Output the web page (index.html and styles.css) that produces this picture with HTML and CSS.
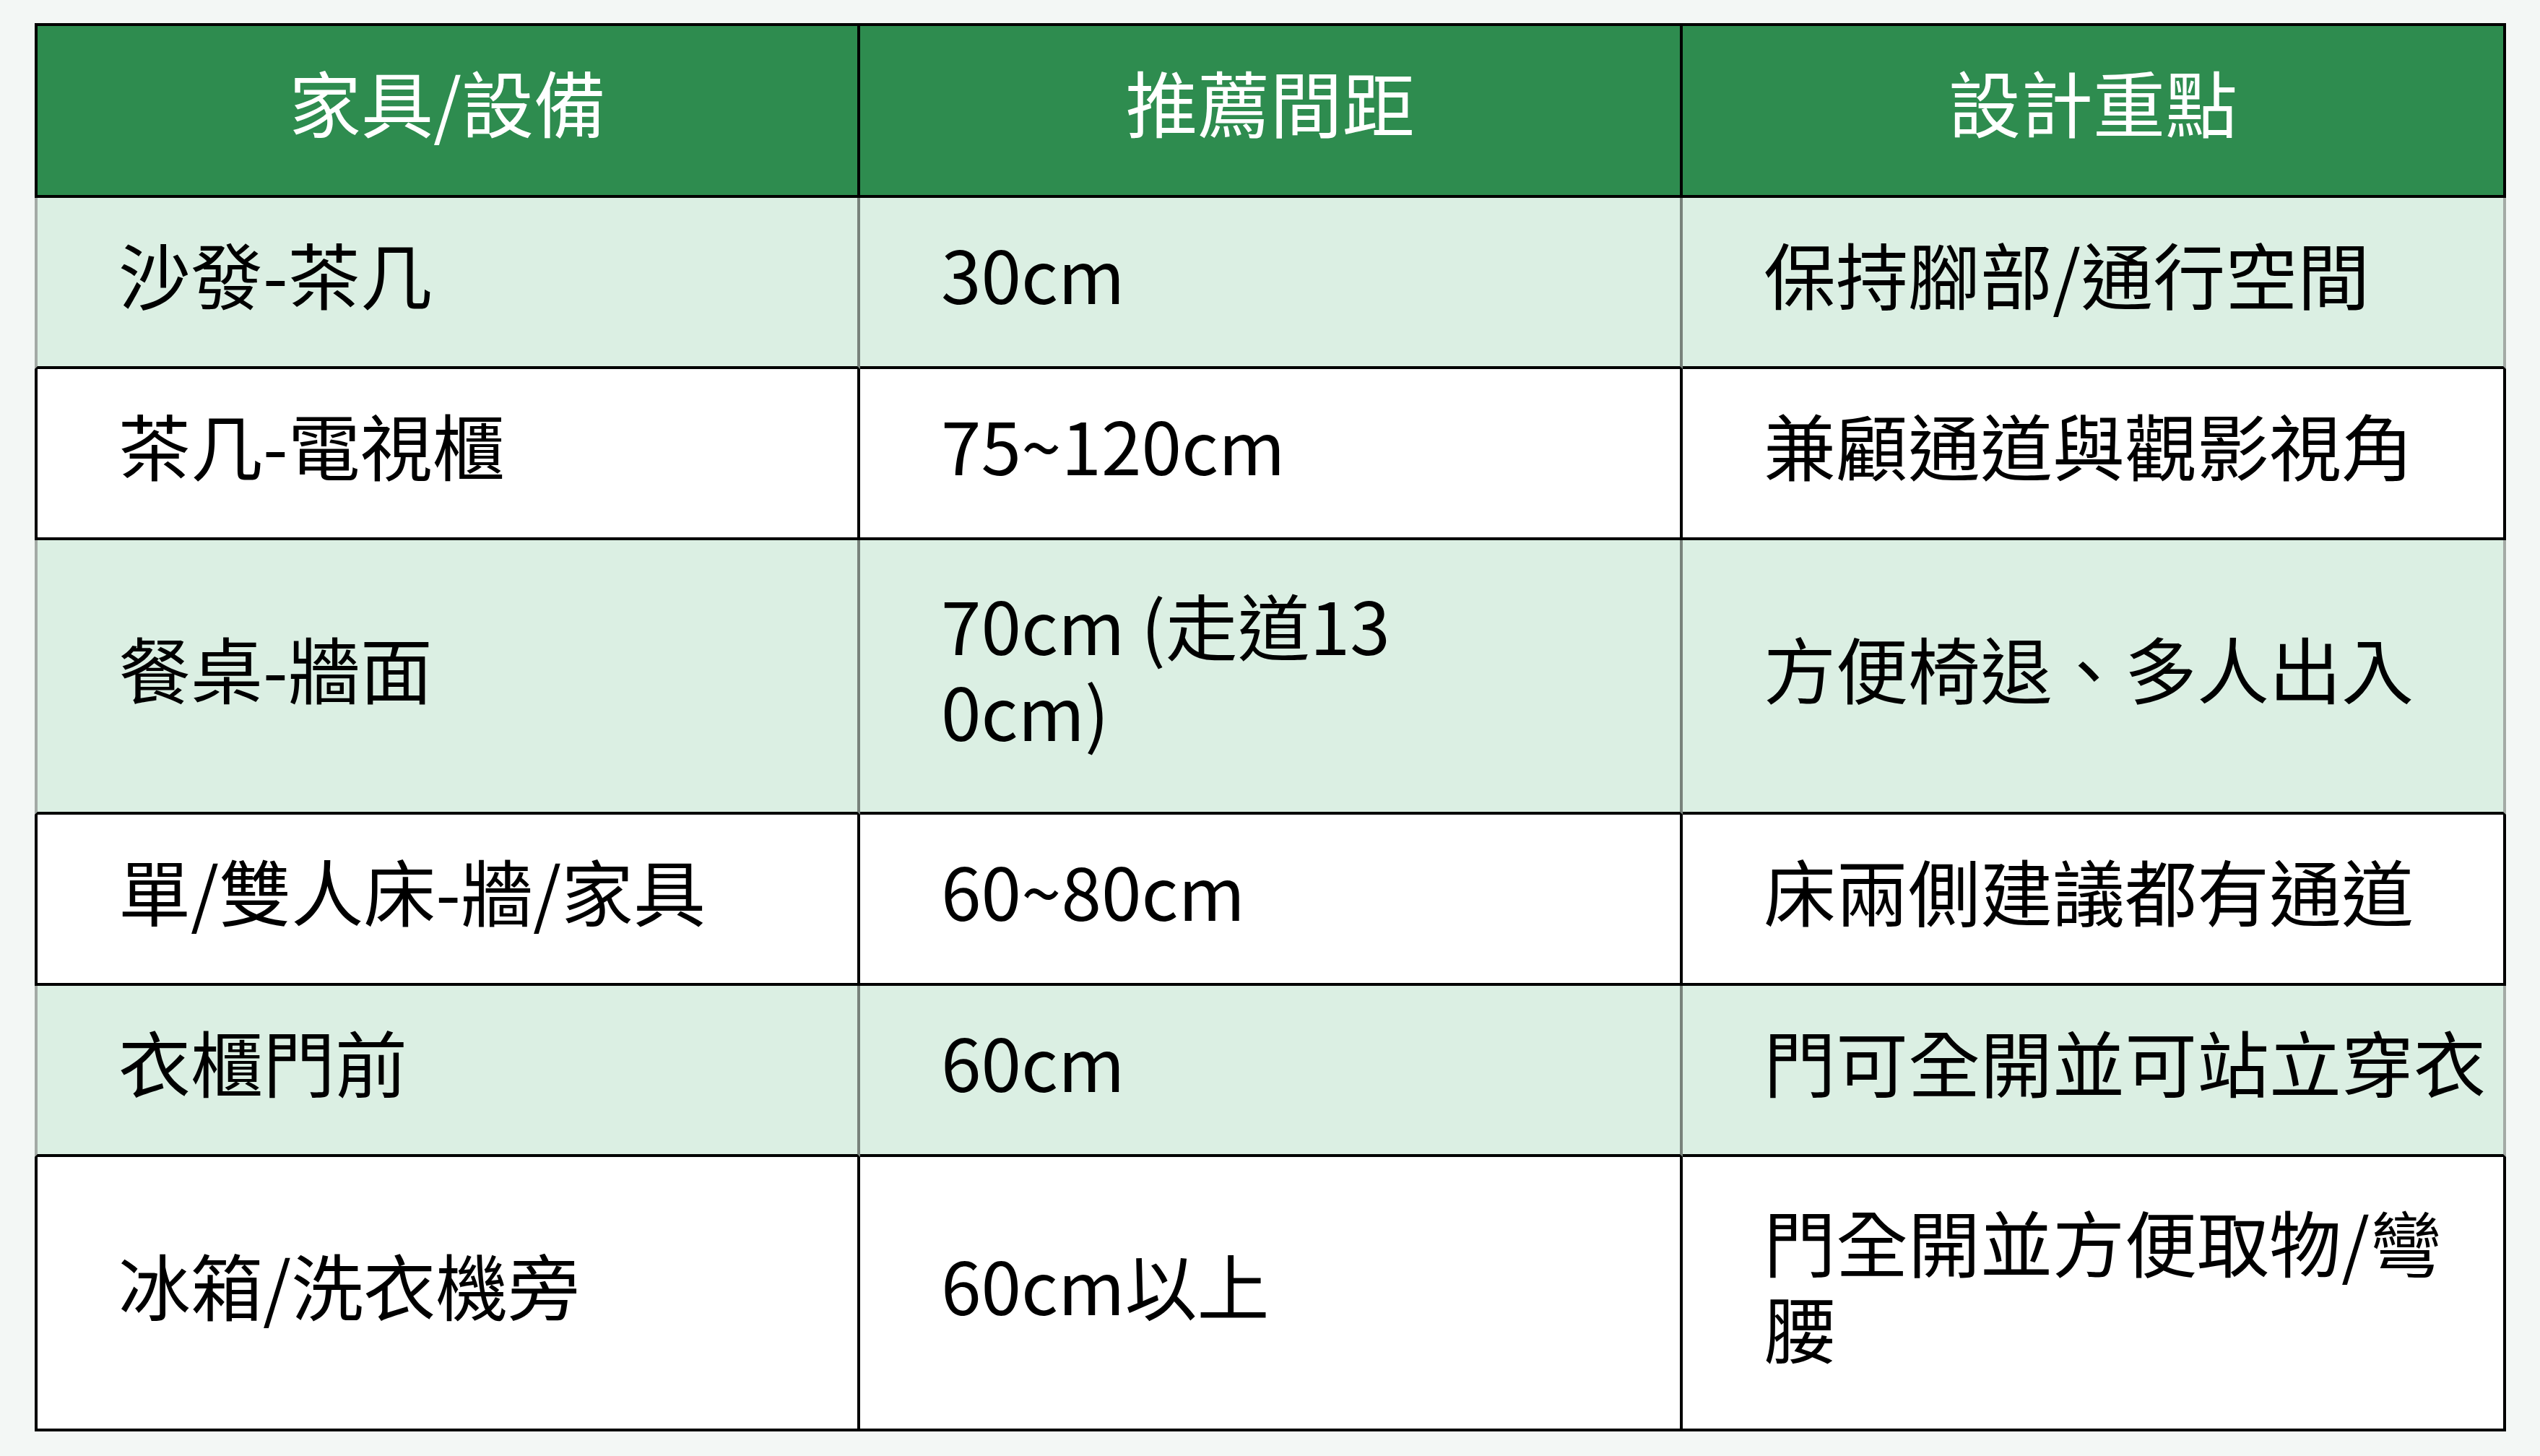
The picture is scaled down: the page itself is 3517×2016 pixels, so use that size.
FILE: index.html
```html
<!DOCTYPE html>
<html lang="zh-Hant">
<head>
<meta charset="utf-8">
<title>家具間距</title>
<link rel="stylesheet" href="styles.css">
</head>
<body>
<table class="spacing-table">
  <colgroup>
    <col class="col-a">
    <col class="col-b">
    <col class="col-c">
  </colgroup>
  <thead>
    <tr>
      <th>家具/設備</th>
      <th>推薦間距</th>
      <th>設計重點</th>
    </tr>
  </thead>
  <tbody>
    <tr class="alt">
      <td>沙發-茶几</td>
      <td><div class="dist">30cm</div></td>
      <td>保持腳部/通行空間</td>
    </tr>
    <tr>
      <td>茶几-電視櫃</td>
      <td><div class="dist">75~120cm</div></td>
      <td>兼顧通道與觀影視角</td>
    </tr>
    <tr class="alt tall">
      <td>餐桌-牆面</td>
      <td><div class="dist">70cm (走道130cm)</div></td>
      <td>方便椅退、多人出入</td>
    </tr>
    <tr>
      <td>單/雙人床-牆/家具</td>
      <td><div class="dist">60~80cm</div></td>
      <td>床兩側建議都有通道</td>
    </tr>
    <tr class="alt">
      <td>衣櫃門前</td>
      <td><div class="dist">60cm</div></td>
      <td>門可全開並可站立穿衣</td>
    </tr>
    <tr class="tall">
      <td>冰箱/洗衣機旁</td>
      <td><div class="dist">60cm以上</div></td>
      <td>門全開並方便取物/彎腰</td>
    </tr>
  </tbody>
</table>
</body>
</html>
```

FILE: styles.css
```css
html, body {
  margin: 0;
  padding: 0;
  background: #f3f7f5;
}

body {
  padding: 32px 0 0 48px;
  font-family: "Noto Sans CJK TC", "Noto Sans", sans-serif;
  font-size: 100px;
  color: #000;
}

.spacing-table {
  width: 3422px;
  table-layout: fixed;
  border-collapse: separate;
  border-spacing: 0;
}

.col-a { width: 1143px; }
.col-b { width: 1139px; }
.col-c { width: 1140px; }

.spacing-table th,
.spacing-table td {
  padding: 44px 112px 70px;
  line-height: 119px;
  vertical-align: middle;
  border-right: 4px solid #000;
  border-bottom: 4px solid #000;
}

.spacing-table th:first-child,
.spacing-table td:first-child {
  border-left: 4px solid #000;
}

.spacing-table th {
  background: #2e8c4f;
  color: #fff;
  font-weight: 400;
  text-align: center;
  padding-bottom: 71px;
  border-top: 4px solid #000;
}

.spacing-table td {
  text-align: left;
  background: #fff;
}

.spacing-table td:nth-child(3) {
  padding-right: 16px;
}

.spacing-table tr.tall td {
  padding-top: 56px;
  padding-bottom: 82px;
}

.spacing-table tr.alt td {
  background: #dbefe3;
  border-right-color: #78827b;
}

.spacing-table tr.alt td:first-child {
  border-left-color: #a3aaa5;
}

.spacing-table tr.alt td:last-child {
  border-right-color: #a3aaa5;
}

.dist {
  max-width: 640px;
  word-break: break-all;
}
```
